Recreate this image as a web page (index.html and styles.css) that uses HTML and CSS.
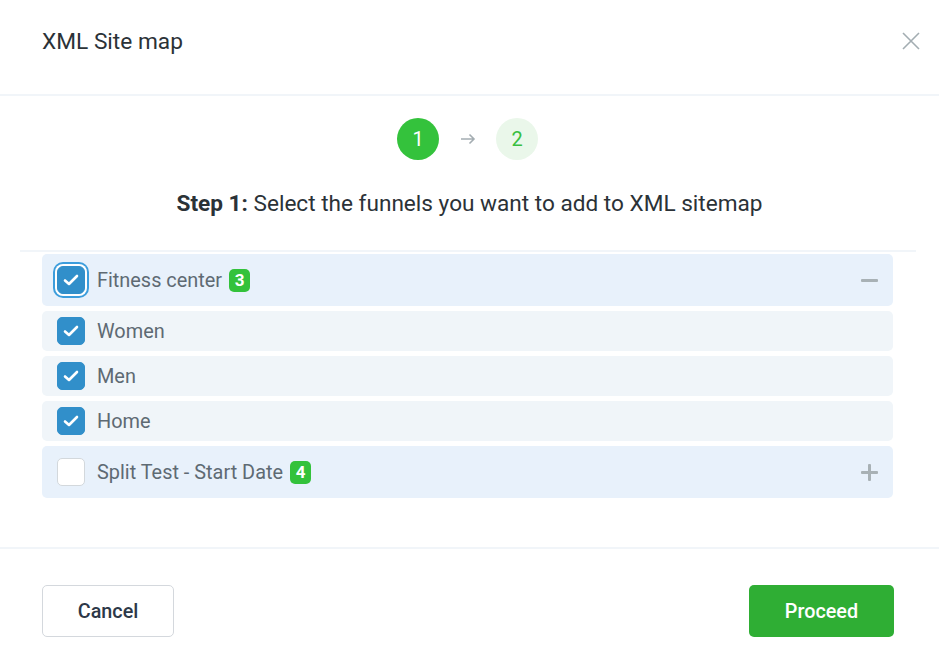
FILE: index.html
```html
<!DOCTYPE html>
<html lang="en">
<head>
<meta charset="utf-8">
<title>XML Site map</title>
<link rel="stylesheet" href="styles.css">
</head>
<body>
<div class="modal">
  <header class="modal-header">
    <h1 class="modal-title">XML Site map</h1>
    <button class="close-btn" aria-label="Close">
      <svg width="18" height="18" viewBox="0 0 18 18"><path d="M1 1 L17 17 M17 1 L1 17" stroke="#a3adb2" stroke-width="1.6" fill="none"/></svg>
    </button>
  </header>

  <section class="steps">
    <div class="step-track">
      <span class="step-dot active">1</span>
      <svg class="step-arrow" width="16" height="12" viewBox="0 0 16 12"><path d="M1 6 H14 M9.5 1.5 L14 6 L9.5 10.5" stroke="#a4adb2" stroke-width="1.6" fill="none"/></svg>
      <span class="step-dot next">2</span>
    </div>
    <p class="step-text"><strong>Step 1:</strong> Select the funnels you want to add to XML sitemap</p>
  </section>

  <div class="list-wrap">
    <ul class="funnel-list">
      <li class="row group">
        <span class="check checked focus"><svg width="16" height="12" viewBox="0 0 16 12"><path d="M2 6.5 L6 10 L14 2" stroke="#fff" stroke-width="2.6" fill="none" stroke-linecap="round" stroke-linejoin="round"/></svg></span>
        <span class="label">Fitness center</span>
        <span class="badge">3</span>
        <span class="toggle minus"></span>
      </li>
      <li class="row item">
        <span class="check checked"><svg width="16" height="12" viewBox="0 0 16 12"><path d="M2 6.5 L6 10 L14 2" stroke="#fff" stroke-width="2.6" fill="none" stroke-linecap="round" stroke-linejoin="round"/></svg></span>
        <span class="label">Women</span>
      </li>
      <li class="row item">
        <span class="check checked"><svg width="16" height="12" viewBox="0 0 16 12"><path d="M2 6.5 L6 10 L14 2" stroke="#fff" stroke-width="2.6" fill="none" stroke-linecap="round" stroke-linejoin="round"/></svg></span>
        <span class="label">Men</span>
      </li>
      <li class="row item">
        <span class="check checked"><svg width="16" height="12" viewBox="0 0 16 12"><path d="M2 6.5 L6 10 L14 2" stroke="#fff" stroke-width="2.6" fill="none" stroke-linecap="round" stroke-linejoin="round"/></svg></span>
        <span class="label">Home</span>
      </li>
      <li class="row group">
        <span class="check"></span>
        <span class="label">Split Test - Start Date</span>
        <span class="badge">4</span>
        <span class="toggle plus"></span>
      </li>
    </ul>
  </div>

  <footer class="modal-footer">
    <button class="btn btn-cancel">Cancel</button>
    <button class="btn btn-proceed">Proceed</button>
  </footer>
</div>
</body>
</html>
```

FILE: styles.css
```css
* { box-sizing: border-box; }
html, body { margin: 0; padding: 0; background: #fff; }
body { font-family: Roboto, "Liberation Sans", Arial, sans-serif; color: #2c3338; }

.modal { width: 939px; height: 658px; background: #fff; }

.modal-header {
  height: 96px;
  display: flex;
  align-items: center;
  justify-content: space-between;
  padding: 0 18px 12px 42px;
  border-bottom: 2px solid #f1f5f9;
}
.modal-title { margin: 0; font-size: 22.7px; font-weight: 400; color: #2b3237; }
.close-btn { background: none; border: 0; padding: 0; width: 20px; height: 20px; display: flex; align-items: center; justify-content: center; cursor: pointer; }

.steps { display: flex; flex-direction: column; align-items: center; padding-top: 22px; }
.step-track { display: flex; align-items: center; gap: 20.5px; margin-right: 4px; }
.step-dot {
  width: 42px; height: 42px; border-radius: 50%;
  display: flex; align-items: center; justify-content: center;
  font-size: 20px;
}
.step-dot.active { background: #34c23c; color: #fff; }
.step-dot.next { background: #eaf7ea; color: #39bf40; }
.step-text { margin: 31px 0 0; font-size: 22.6px; line-height: 26px; color: #2b3237; }
.step-text strong { font-weight: 700; }

.list-wrap {
  margin: 33px 23px 0 20px;
  border-top: 2px solid #f1f5f9;
  padding: 2px 23px 49px 22px;
}
.funnel-list { list-style: none; margin: 0; padding: 0; display: flex; flex-direction: column; gap: 5px; }
.row {
  display: flex; align-items: center;
  padding: 0 15px;
  border-radius: 5px;
}
.row.group { height: 52px; background: #e8f1fb; }
.row.item { height: 40px; background: #f0f5f9; }

.check {
  width: 28px; height: 28px; border-radius: 5px;
  display: flex; align-items: center; justify-content: center;
  background: #fff; border: 1px solid #d3d8dc;
  flex: none;
}
.check.checked { background: #318fca; border-color: #318fca; }
.check.focus { box-shadow: 0 0 0 2px #fff, 0 0 0 4px #3c9ddc; border-radius: 6px; }
.label { margin-left: 12px; font-size: 19.9px; color: #5e6a73; }
.badge {
  margin-left: 7px;
  min-width: 21px; height: 23px; padding: 0 5px;
  border-radius: 5px; background: #33c23b; color: #fff;
  font-size: 17px; font-weight: 700;
  display: flex; align-items: center; justify-content: center;
}
.toggle { margin-left: auto; width: 17px; height: 17px; position: relative; }
.toggle::before, .toggle::after {
  content: ""; position: absolute; background: #a8b1b5; border-radius: 1px;
}
.toggle::before { left: 0; right: 0; top: 7px; height: 3px; }
.plus::after { top: 0; bottom: 0; left: 7px; width: 3px; }

.modal-footer {
  border-top: 2px solid #f1f5f9;
  display: flex; justify-content: space-between;
  padding: 36px 45px 0 42px;
}
.btn {
  height: 52px; border-radius: 5px;
  font-family: Roboto, "Liberation Sans", Arial, sans-serif;
  font-size: 19.8px; font-weight: 500; cursor: pointer;
}
.btn-cancel { width: 132px; background: #fff; border: 1px solid #d4d8dd; color: #2d3848; }
.btn-proceed { width: 145px; background: #2fae34; border: 0; color: #fff; }
```
